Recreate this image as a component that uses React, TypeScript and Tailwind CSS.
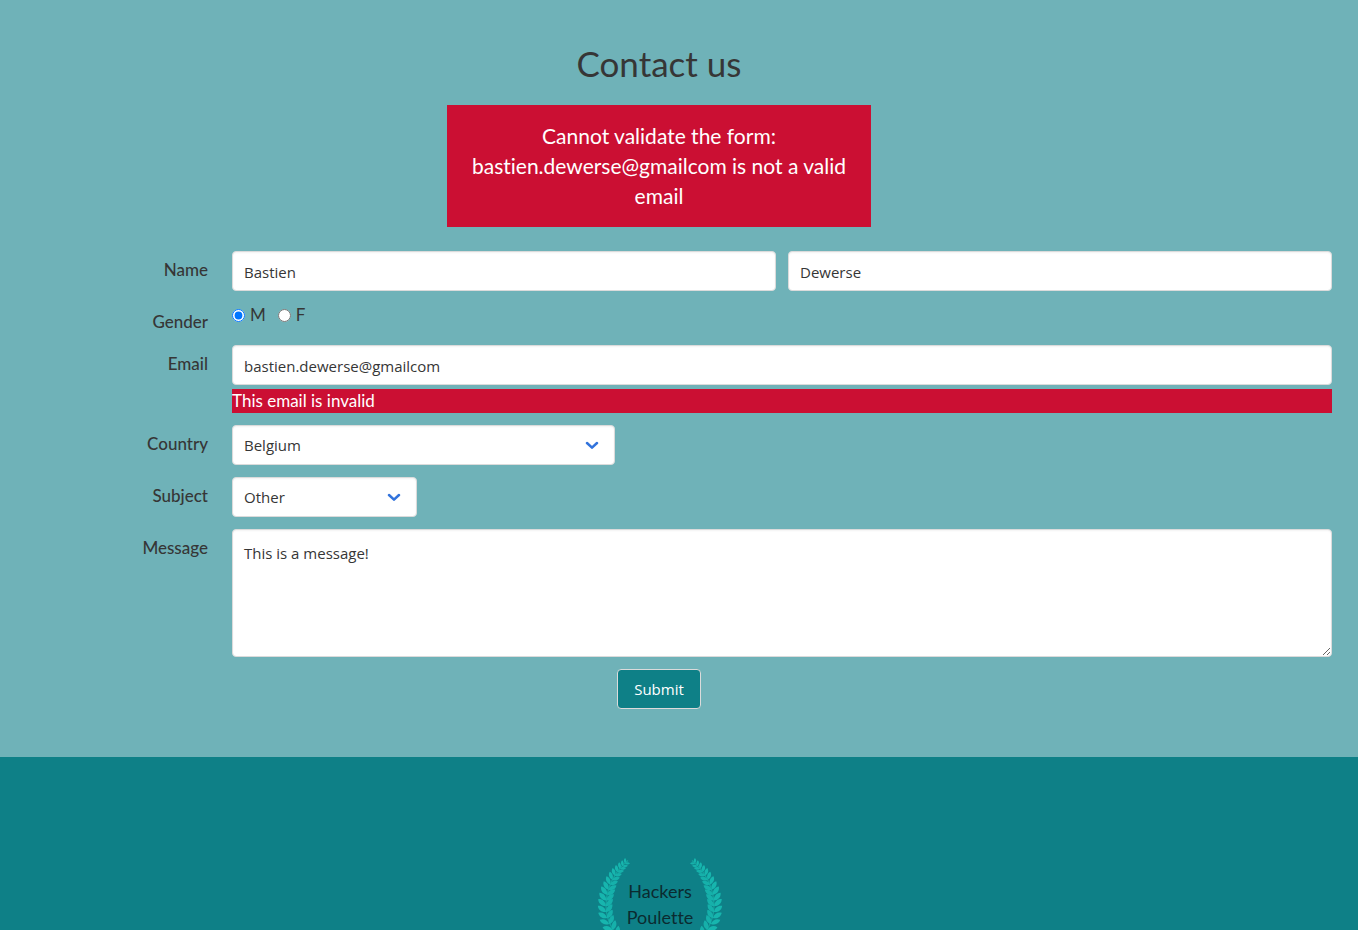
import type { ReactNode } from 'react';

const leaves = [
  { x: 30, y: 7, a: 52 },
  { x: 27.5, y: 9.5, a: 48 },
  { x: 25, y: 12, a: 44 },
  { x: 22.3, y: 15, a: 41 },
  { x: 19.7, y: 18.500, a: 37 },
  { x: 17.3, y: 22.5, a: 33 },
  { x: 15, y: 27, a: 28 },
  { x: 13.2, y: 32, a: 22 },
  { x: 11.7, y: 37, a: 16 },
  { x: 10.6, y: 42.5, a: 10 },
  { x: 10, y: 48, a: 4 },
  { x: 10, y: 54, a: -2 },
  { x: 10.8, y: 60, a: -8 },
  { x: 12.5, y: 66, a: -16 },
  { x: 15.5, y: 72, a: -25 },
  { x: 19.5, y: 78, a: -32 },
];

function Branch() {
  return (
    <g fill="#17b5ae">
      <path d="M32 5C19 15 10 33 10 50c0 11 4 21 11 30" fill="none" stroke="#15a59f" strokeWidth="1.2" />
      {leaves.map((leaf, i) => {
        const s = Math.min(1, 0.5 + i * 0.06);
        return (
          <g key={leaf.y} transform={`translate(${leaf.x} ${leaf.y}) rotate(${leaf.a}) scale(${s})`}>
            <path d="M0 2.500C-5 3-8-0.500-8-4C-4-4.500-0.500-2 0 2.500Z" />
            <path d="M0 2.500C4.500 2.500 7-1 6.500-5C2.500-4.500 0-2 0 2.500Z" opacity="0.9" />
          </g>
        );
      })}
    </g>
  );
}

function Laurel() {
  return (
    <svg viewBox="0 0 128 76" className="h-[76px] w-32" aria-hidden="true">
      <g transform="translate(0 1.5)">
        <Branch />
      </g>
      <g transform="translate(128 1.5) scale(-1 1)">
        <Branch />
      </g>
    </svg>
  );
}

function Row({ label, htmlFor, children }: { label: string; htmlFor?: string; children: ReactNode }) {
  return (
    <div className="grid grid-cols-[208px_1fr] gap-6">
      <label htmlFor={htmlFor} className="pt-[7px] text-right font-medium leading-6">
        {label}
      </label>
      <div className="min-w-0">{children}</div>
    </div>
  );
}

const box =
  "block rounded border border-[#dbdbdb] bg-white px-[11px] font-['Open_Sans',sans-serif] text-[15px] text-[#363636] shadow-[inset_0_1px_2px_rgba(10,10,10,0.05)] outline-none";

function Select({ id, options, className }: { id: string; options: string[]; className: string }) {
  return (
    <div className={`relative ${className}`}>
      <select id={id} className={`${box} h-10 w-full appearance-none`}>
        {options.map((o) => (
          <option key={o}>{o}</option>
        ))}
      </select>
      <svg
        viewBox="0 0 14 8"
        className="pointer-events-none absolute right-4 top-4 h-2 w-3.5"
        fill="none"
        stroke="#3273dc"
        strokeWidth="2.5"
        strokeLinecap="round"
        strokeLinejoin="round"
        aria-hidden="true"
      >
        <path d="M2 2l5 4.700 5-4.700" />
      </svg>
    </div>
  );
}

export default function App() {
  return (
    <div className="flex min-h-screen flex-col bg-[#0e8087] font-[Lato,sans-serif] text-[17px] text-[#363636] [font-variant-ligatures:none]">
      <main className="bg-[#6fb2b8] pb-12 pt-[45px]">
        <div className="pr-10 text-center">
          <h1 className="mb-6 text-[35px] leading-9">Contact us</h1>
          <div role="alert" className="mx-auto mb-6 w-[424px] bg-[#cb0f33] px-6 py-4 text-[21px] leading-[30px] text-white">
            Cannot validate the form: bastien.dewerse@gmailcom is not a valid email
          </div>
        </div>
        <form className="flex flex-col gap-3" onSubmit={(e) => e.preventDefault()}>
          <div className="flex flex-col gap-3 pr-[26px]">
            <Row label="Name" htmlFor="first">
              <div className="flex gap-3">
                <input id="first" defaultValue="Bastien" className={`${box} h-10 min-w-0 flex-1 pt-0.5`} />
                <input aria-label="Last name" defaultValue="Dewerse" className={`${box} h-10 min-w-0 flex-1 pt-0.5`} />
              </div>
            </Row>
            <div className="-mb-px">
              <Row label="Gender" htmlFor="male">
                <div className="flex gap-3 leading-6">
                  <label className="flex items-center gap-[5px]">
                    <input id="male" type="radio" name="gender" defaultChecked className="size-[13px]" />M
                  </label>
                  <label className="flex items-center gap-[5px]">
                    <input type="radio" name="gender" className="size-[13px]" />F
                  </label>
                </div>
              </Row>
            </div>
            <Row label="Email" htmlFor="email">
              <input id="email" defaultValue="bastien.dewerse@gmailcom" className={`${box} h-10 w-full pt-0.5`} />
              <p className="mt-1 bg-[#cb0f33] leading-6 text-white">This email is invalid</p>
            </Row>
            <Row label="Country" htmlFor="country">
              <Select id="country" options={['Belgium', 'France', 'Germany']} className="w-[383px]" />
            </Row>
            <Row label="Subject" htmlFor="subject">
              <Select id="subject" options={['Other', 'Order', 'Support']} className="w-[185px]" />
            </Row>
            <Row label="Message" htmlFor="message">
              <textarea
                id="message"
                defaultValue="This is a message!"
                className={`${box} h-32 w-full resize-y py-[11px] leading-6`}
              />
            </Row>
          </div>
          <div className="flex justify-center pr-10">
            <button
              type="submit"
              className="h-10 rounded border border-[#dbdbdb] bg-[#0e8087] px-4 font-['Open_Sans',sans-serif] text-[15px] font-medium text-white"
            >
              Submit
            </button>
          </div>
        </form>
      </main>
      <footer className="flex justify-center pr-[38px] pt-[97px]">
        <div className="relative">
          <Laurel />
          <p className="absolute inset-x-0 top-6 text-center text-lg leading-[26px] text-[#0b2b30]">
            Hackers
            <br />
            Poulette
          </p>
        </div>
      </footer>
    </div>
  );
}
